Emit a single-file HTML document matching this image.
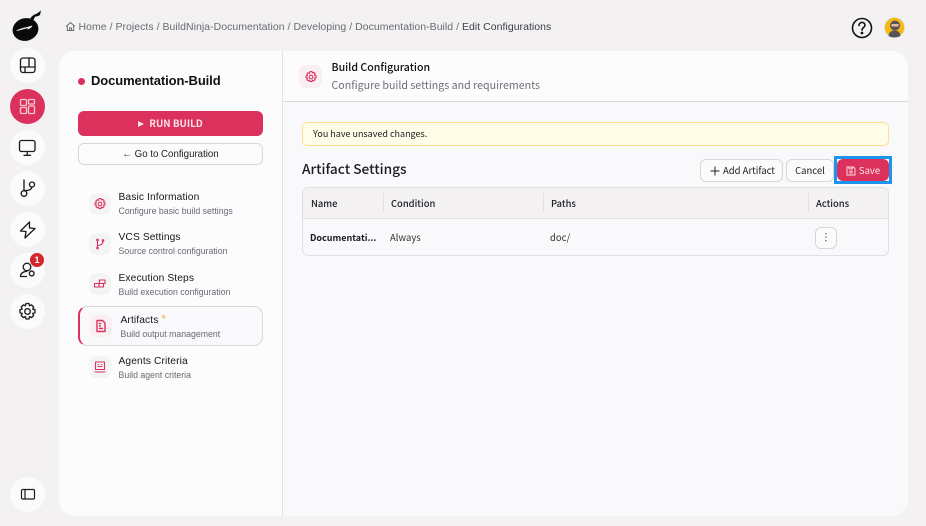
<!DOCTYPE html>
<html><head><meta charset="utf-8"><style>
html,body{margin:0;padding:0}
body{width:926px;height:526px;background:#f3f1f2;position:relative;overflow:hidden;font-family:"Liberation Sans",sans-serif;color:#111}
.a{position:absolute;white-space:nowrap}
.n{position:absolute;left:10px;width:35px;height:35px;border-radius:50%;background:#fbfbfb}
.n svg{position:absolute;left:7px;top:7px;width:21px;height:21px;fill:none;stroke:#1c1c22;stroke-width:1.35;stroke-linecap:round;stroke-linejoin:round}
.ic{position:absolute;left:89px;width:22px;height:22px;border-radius:7px;background:#f5f4f5}
.ic svg{position:absolute;left:4px;top:4px;width:14px;height:14px;fill:none;stroke:#d9325f;stroke-width:1.1;stroke-linecap:round;stroke-linejoin:round}
.t{font-size:10.25px;letter-spacing:.1px;color:#17171c}
.s{font-size:8.75px;color:#666a75}
.m{font-family:"Noto Sans CJK SC","Liberation Sans",sans-serif}
.btn{position:absolute;box-sizing:border-box;background:#fbfbfc;border:1px solid #d8d6d8;border-radius:6px;font-size:9.5px;text-align:center;color:#222}
.th{font-size:9.4px;font-weight:500;color:#1d1d24;top:197px;line-height:13px}
.sep{position:absolute;top:193px;width:1px;height:19px;background:#e2dfe0}
</style></head><body>

<svg class="a" style="left:11px;top:8px" width="32" height="34" viewBox="0 0 32 34"><path d="M19 11c1-2 2.500-3.500 4.500-4.500 2-.5 4-2 6.500-4l-1 4.500c-1.500 1-3 1.500-4.500 1.500-1 1-1.500 2-2 3.500z" fill="#0a0a0a"/><ellipse cx="14.500" cy="21.500" rx="13" ry="11.300" fill="#0a0a0a" transform="rotate(-14 14.500 21.500)"/><path d="M5 23c3-2 6-3 9-3.500 3-.5 5-1.500 7.500-2-1 2.500-3.500 3.800-5.500 4 .5-.5 1-1 1-1.500-1.500.5-3.500 1-5.500 1.500-2.500.7-4.500 1.500-6.500 1.500z" fill="#f3f1f2"/></svg>

<div class="n" style="top:48px"><svg viewBox="0 0 21 21"><rect x="3.500" y="3" width="14.500" height="14.500" rx="2.500"/><path d="M3.500 12h14.500M12 3v9M8 12v5.500"/></svg></div>
<div class="n" style="top:89px;background:#dc315d"><svg viewBox="0 0 21 21" style="stroke:#f9c9d6;stroke-width:1.300"><rect x="3.500" y="3.500" width="6" height="6" rx="1"/><rect x="11.500" y="3.500" width="6" height="4.500" rx="1"/><rect x="3.500" y="11.500" width="6" height="6" rx="1"/><rect x="11.500" y="10" width="6" height="7.500" rx="1"/></svg></div>
<div class="n" style="top:130px"><svg viewBox="0 0 21 21"><rect x="2.500" y="3.500" width="15.500" height="11" rx="2"/><path d="M10.250 14.500V18M7 18.300h6.500"/></svg></div>
<div class="n" style="top:171px"><svg viewBox="0 0 21 21"><circle cx="7" cy="15.500" r="2.800"/><circle cx="15" cy="6.500" r="2.500"/><path d="M7 12.700V2M7 12.700c5 0 7.500-1.500 8-3.700"/></svg></div>
<div class="n" style="top:212px"><svg viewBox="0 0 21 21"><path d="M12.500 3 3.500 12l5.500.5L8 19l10-9.500-5.500-.5z"/></svg></div>
<div class="n" style="top:253px"><svg viewBox="0 0 21 21"><circle cx="10" cy="7" r="3.800"/><path d="M3.500 16.500c0-3.200 2.700-5 6-5M3.500 16.500h6"/><circle cx="14.700" cy="13.500" r="2.400" stroke-dasharray="1.700 .7"/></svg></div>
<div class="a" style="left:30px;top:253px;width:14px;height:14px;border-radius:50%;background:#d3262f;color:#fff;font-size:9px;font-weight:700;line-height:14px;text-align:center">1</div>
<div class="n" style="top:294px"><svg viewBox="0 0 21 21"><circle cx="10.500" cy="10.500" r="2.800"/><path d="M9 2.500h3l.5 2.300 2-.9 2.200 2.200-1 2 2.300.6v3.100l-2.300.6 1 2-2.200 2.200-2-1-.5 2.400H9l-.6-2.400-2 1-2.200-2.200 1-2-2.200-.6V8.700l2.200-.6-1-2 2.200-2.200 2 .9z"/></svg></div>
<div class="n" style="top:477px"><svg viewBox="0 0 21 21" style="stroke-width:1.200"><rect x="4.500" y="5.500" width="13" height="9.500" rx="1.200"/><path d="M8 5.500v9.500"/></svg></div>

<svg class="a" style="left:65px;top:21px" width="11" height="11" viewBox="0 0 11 11" fill="none" stroke="#666" stroke-width=".9"><path d="M1 5.500 5.500 1.500 10 5.500M2.300 4.800V9.500h6.400V4.800M4.500 9.500V7h2v2.500"/></svg>
<div class="a" style="left:78.500px;top:21px;font-size:10.5px;line-height:13px;color:#6a6a72;letter-spacing:.03px">Home / Projects / BuildNinja-Documentation / Developing / Documentation-Build / <span style="color:#3d3d47">Edit Configurations</span></div>

<svg class="a" style="left:851px;top:17px" width="22" height="22" viewBox="0 0 22 22" fill="none" stroke="#111" stroke-width="1.600"><circle cx="11" cy="11" r="9.500"/><path d="M8 8.500c0-4 6-4 6-.3 0 2.300-3 2.300-3 4.800" stroke-linecap="round"/><circle cx="11" cy="16" r=".6" fill="#111"/></svg>
<svg class="a" style="left:884px;top:17px" width="21" height="21" viewBox="0 0 21 21"><circle cx="10.500" cy="10.500" r="10" fill="#f7b90f" stroke="#ddd" stroke-width=".8"/><path d="M4.500 19c.5-4 3-5.500 6-5.500s5.500 1.500 6 5.500q-6 3-12 0z" fill="#55555a"/><circle cx="11" cy="8.500" r="5" fill="#55555a"/><rect x="7.500" y="7" width="7" height="2.500" fill="#eeb7a8"/></svg>

<div class="a" style="left:59px;top:51px;width:849px;height:465px;border-radius:16px;background:#f9f9fb;overflow:hidden">
 <div class="a" style="left:0;top:0;width:223px;height:465px;background:#fcfcfc;border-right:1px solid #e3e1e2"></div>
 <div class="a" style="left:224px;top:0;width:625px;height:50px;background:#fcfcfc;border-bottom:1px solid #d8d7d9"></div>
</div>

<div class="a" style="left:78px;top:77.500px;width:7px;height:7px;border-radius:50%;background:#dc315d"></div>
<div class="a" style="left:91px;top:72px;font-size:13px;line-height:17px;font-weight:700;color:#111;letter-spacing:-.1px">Documentation-Build</div>
<div class="a m" style="left:78px;top:111px;width:185px;height:25px;border-radius:6px;background:#dc315d;color:#fbe4ea;font-size:9.800px;font-weight:700;line-height:25px;text-align:center"><span style="display:inline-block;width:0;height:0;border-left:6px solid #fbe4ea;border-top:3.500px solid transparent;border-bottom:3.500px solid transparent;margin-right:5px"></span>RUN BUILD</div>
<div class="btn" style="left:78px;top:143px;width:185px;height:22px;line-height:21px;font-size:9.700px">← Go to Configuration</div>

<div class="ic" style="top:193px"><svg viewBox="0 0 14 14"><circle cx="7" cy="7" r="1.800"/><path d="M6 1.500h2l.4 1.500 1.400-.6 1.400 1.400-.7 1.400 1.500.4v2l-1.500.4.700 1.400-1.400 1.400-1.400-.7-.4 1.500H6l-.4-1.500-1.400.7-1.400-1.400.7-1.400-1.500-.4V6l1.500-.4-.7-1.400 1.400-1.400 1.400.6z"/></svg></div>
<div class="a t" style="left:118.500px;top:191px;line-height:13px">Basic Information</div>
<div class="a s" style="left:118.500px;top:205px;line-height:12px">Configure basic build settings</div>

<div class="ic" style="top:233px"><svg viewBox="0 0 14 14"><circle cx="4.500" cy="3" r=".8"/><circle cx="4.500" cy="11" r=".8"/><circle cx="10" cy="3.500" r=".8"/><path d="M4.500 4v6M4.500 8.500c3 0 5.500-1.500 5.500-4"/></svg></div>
<div class="a t" style="left:118.500px;top:231px;line-height:13px">VCS Settings</div>
<div class="a s" style="left:118.500px;top:245px;line-height:12px">Source control configuration</div>

<div class="ic" style="top:273px"><svg viewBox="0 0 14 14"><rect x="1.500" y="6.500" width="4.500" height="3.500"/><rect x="6" y="6.500" width="4.500" height="3.500"/><rect x="6.500" y="3" width="5.500" height="3.500"/></svg></div>
<div class="a t" style="left:118.500px;top:272px;line-height:13px">Execution Steps</div>
<div class="a s" style="left:118.500px;top:286px;line-height:12px">Build execution configuration</div>

<div class="a" style="left:78px;top:306px;width:185px;height:40px;box-sizing:border-box;border:1px solid #d9d7da;border-left:2px solid #dc315d;border-radius:9px;background:#f9f9fc"></div>
<div class="ic" style="top:315px;left:90px;background:#f9eef2"><svg viewBox="0 0 14 14" style="stroke-width:1.400"><path d="M3 1.500h5.500L11 4v8.500H3z"/><path d="M5.500 4.500h1M5.500 7h1M5.500 9.500h3"/></svg></div>
<div class="a t" style="left:120.500px;top:314px;line-height:13px">Artifacts <span style="color:#f5b13d;font-size:11.500px">*</span></div>
<div class="a s" style="left:120.500px;top:328px;line-height:12px">Build output management</div>

<div class="ic" style="top:356px"><svg viewBox="0 0 14 14"><rect x="2.500" y="2" width="9" height="7.500"/><path d="M2 12h10M5 6.500h4"/><path d="M5 4.500h.5M8.500 4.500h.5"/></svg></div>
<div class="a t" style="left:118.500px;top:355px;line-height:13px">Agents Criteria</div>
<div class="a s" style="left:118.500px;top:369px;line-height:12px">Build agent criteria</div>

<div class="ic" style="left:299px;top:65px;width:23px;height:23px;background:#f9eef2"><svg viewBox="0 0 14 14" style="left:4.500px;top:4.500px"><circle cx="7" cy="7" r="1.800"/><path d="M6 1.500h2l.4 1.500 1.400-.6 1.400 1.400-.7 1.400 1.500.4v2l-1.500.4.700 1.400-1.400 1.400-1.400-.7-.4 1.500H6l-.4-1.500-1.400.7-1.400-1.400.7-1.400-1.500-.4V6l1.500-.4-.7-1.400 1.400-1.400 1.400.6z"/></svg></div>
<div class="a m" style="left:331.500px;top:60px;font-size:10.600px;line-height:15px;font-weight:500;color:#111">Build Configuration</div>
<div class="a m" style="left:331.500px;top:78px;font-size:10.650px;line-height:16px;color:#6c6f7a">Configure build settings and requirements</div>

<div class="a" style="left:302px;top:122px;width:587px;height:24px;box-sizing:border-box;background:#fffce8;border:1px solid #fbe08f;border-radius:5px"></div>
<div class="a m" style="left:313px;top:127px;font-size:9px;line-height:13px;color:#222">You have unsaved changes.</div>

<div class="a m" style="left:302px;top:158.500px;font-size:13.700px;line-height:19px;font-weight:500;color:#1b1b24">Artifact Settings</div>

<div class="btn m" style="left:700px;top:159px;width:83px;height:23px;line-height:21px;font-size:9.500px;text-align:left;padding-left:9px"><svg width="10" height="10" viewBox="0 0 10 10" fill="none" stroke="#222" stroke-width="1" style="vertical-align:-1.500px;margin-right:3px"><path d="M5 .5v9M.5 5h9"/></svg>Add Artifact</div>
<div class="btn m" style="left:786px;top:159px;width:48px;height:23px;line-height:21px;font-size:9.500px">Cancel</div>
<div class="a" style="left:834px;top:156px;width:58px;height:28px;box-sizing:border-box;border:3px solid #1d94ee;background:#fff"></div>
<div class="a m" style="left:837px;top:159px;width:52px;height:22px;border-radius:6px;background:#dc315d;color:#fbe4ea;font-size:9.500px;line-height:22px;text-align:center"><svg width="10" height="10" viewBox="0 0 10 10" fill="none" stroke="#fbe4ea" stroke-width=".9" style="vertical-align:-1.500px;margin-right:3px"><path d="M1 1h6.500L9 2.500V9H1z"/><circle cx="5" cy="6" r="1.200"/><path d="M3 1v1.800h3.500V1"/></svg>Save</div>

<div class="a" style="left:302px;top:187px;width:587px;height:69px;box-sizing:border-box;border:1px solid #e1dfe1;border-radius:6px;background:#f9f9fb;overflow:hidden">
 <div class="a" style="left:0;top:0;width:585px;height:30px;background:#f3f1f2;border-bottom:1px solid #e1dfe1"></div>
</div>
<div class="sep" style="left:383px"></div><div class="sep" style="left:543px"></div><div class="sep" style="left:808px"></div>
<div class="a m th" style="left:311px">Name</div>
<div class="a m th" style="left:391px">Condition</div>
<div class="a m th" style="left:551px">Paths</div>
<div class="a m th" style="left:816px">Actions</div>
<div class="a m" style="left:310px;top:231px;font-size:9px;line-height:14px;font-weight:700;color:#1b1b22">Documentati...</div>
<div class="a m" style="left:390px;top:230px;font-size:9.500px;line-height:14px;color:#333">Always</div>
<div class="a m" style="left:550px;top:230px;font-size:9.500px;line-height:14px;color:#333">doc/</div>
<div class="btn" style="left:815px;top:227px;width:22px;height:22px"></div>
<svg class="a" style="left:824px;top:232px" width="4" height="11" viewBox="0 0 4 11" fill="#666"><rect x="1.200" y="1" width="1.300" height="1.300"/><rect x="1.200" y="4.500" width="1.300" height="1.300"/><rect x="1.200" y="8" width="1.300" height="1.300"/></svg>

</body></html>
